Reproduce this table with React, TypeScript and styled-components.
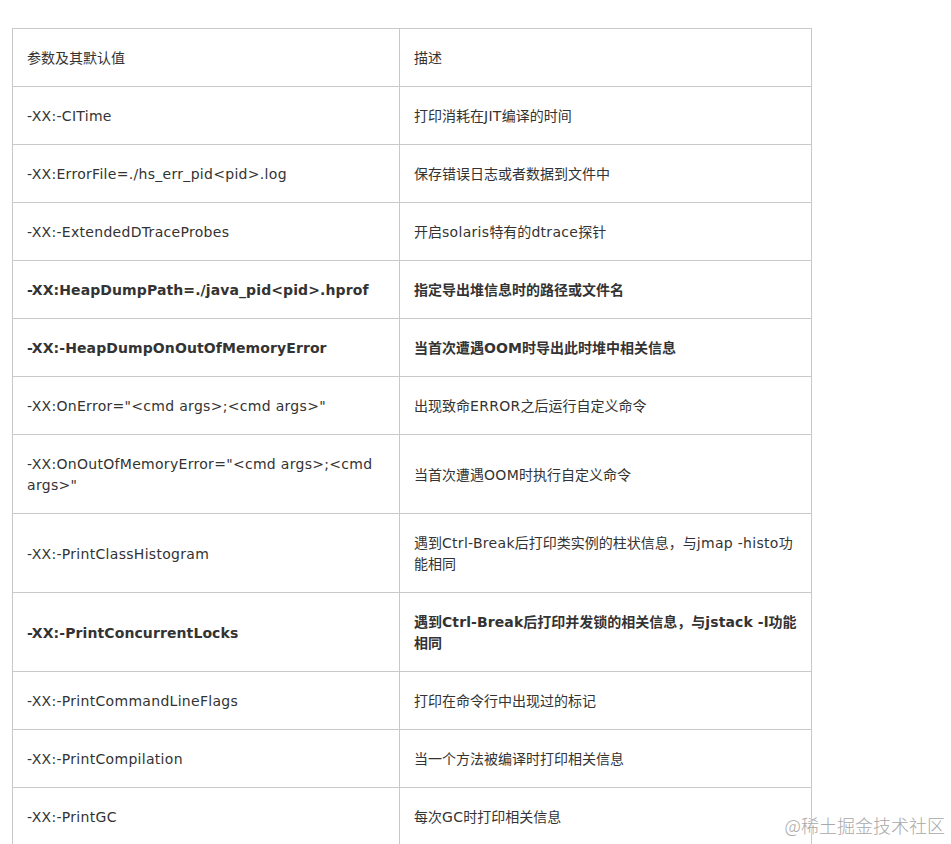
import { FC } from "react";
import { styled, createGlobalStyle } from "styled-components";

type Row = {
  param: string;
  desc: string;
  bold?: boolean;
};

const rows: Row[] = [
  { param: "-XX:-CITime", desc: "打印消耗在JIT编译的时间" },
  { param: "-XX:ErrorFile=./hs_err_pid<pid>.log", desc: "保存错误日志或者数据到文件中" },
  { param: "-XX:-ExtendedDTraceProbes", desc: "开启solaris特有的dtrace探针" },
  { param: "-XX:HeapDumpPath=./java_pid<pid>.hprof", desc: "指定导出堆信息时的路径或文件名", bold: true },
  { param: "-XX:-HeapDumpOnOutOfMemoryError", desc: "当首次遭遇OOM时导出此时堆中相关信息", bold: true },
  { param: '-XX:OnError="<cmd args>;<cmd args>"', desc: "出现致命ERROR之后运行自定义命令" },
  { param: '-XX:OnOutOfMemoryError="<cmd args>;<cmd args>"', desc: "当首次遭遇OOM时执行自定义命令" },
  { param: "-XX:-PrintClassHistogram", desc: "遇到Ctrl-Break后打印类实例的柱状信息，与jmap -histo功能相同" },
  { param: "-XX:-PrintConcurrentLocks", desc: "遇到Ctrl-Break后打印并发锁的相关信息，与jstack -l功能相同", bold: true },
  { param: "-XX:-PrintCommandLineFlags", desc: "打印在命令行中出现过的标记" },
  { param: "-XX:-PrintCompilation", desc: "当一个方法被编译时打印相关信息" },
  { param: "-XX:-PrintGC", desc: "每次GC时打印相关信息" },
];

const GlobalStyle = createGlobalStyle`
  html, body {
    margin: 0;
    background: #fff;
    overflow: hidden;
  }
`;

// latin runs get a bit of tracking so DejaVu reads as wide as Verdana
const MixedText: FC<{ text: string; bold?: boolean }> = ({ text, bold }) => {
  const parts = text.split(/([\x20-\x7e]+)/).filter(Boolean);
  return (
    <>
      {parts.map((p, i) =>
        /^[\x20-\x7e]+$/.test(p) ? (
          <Latin key={i} $bold={bold}>
            {p}
          </Latin>
        ) : (
          p
        )
      )}
    </>
  );
};

export default function App() {
  return (
    <>
      <GlobalStyle />
      <Page>
        <OptionsTable rows={rows} />
        <Watermark>@稀土掘金技术社区</Watermark>
      </Page>
    </>
  );
}

const OptionsTable: FC<{ rows: Row[] }> = ({ rows }) => {
  return (
    <StyledTable>
      <colgroup>
        <col style={{ width: 387 }} />
        <col style={{ width: 412 }} />
      </colgroup>
      <tbody>
        <tr>
          <Cell>参数及其默认值</Cell>
          <Cell>描述</Cell>
        </tr>
        {rows.map((row) => (
          <tr key={row.param}>
            <Cell $bold={row.bold}>
              <MixedText text={row.param} bold={row.bold} />
            </Cell>
            <Cell $bold={row.bold}>
              <MixedText text={row.desc} bold={row.bold} />
            </Cell>
          </tr>
        ))}
      </tbody>
    </StyledTable>
  );
};

const Page = styled.div`
  position: relative;
  width: 951px;
  height: 844px;
  padding: 28px 0 0 12px;
  box-sizing: border-box;
  overflow: hidden;
`;

const StyledTable = styled.table`
  border-collapse: collapse;
  table-layout: fixed;
  width: 800px;
  font-family: "DejaVu Sans", Verdana, "Noto Sans CJK SC", sans-serif;
  font-size: 14px;
  line-height: 21px;
  color: #333;
`;

const Cell = styled.td<{ $bold?: boolean }>`
  border: 1px solid #c9c9c9;
  padding: 19px 14px 17px 14px;
  vertical-align: middle;
  font-weight: ${({ $bold }) => ($bold ? 700 : 400)};
  word-wrap: break-word;
`;

const Latin = styled.span<{ $bold?: boolean }>`
  letter-spacing: ${({ $bold }) => ($bold ? "0.1px" : "0.3px")};
`;

const Watermark = styled.div`
  position: absolute;
  right: 6px;
  bottom: 6px;
  font-family: "Noto Sans CJK SC", sans-serif;
  font-size: 18px;
  font-weight: 300;
  color: #a8a8a8;
  text-shadow: 0 0 2px #fff, 0 0 2px #fff;
`;
